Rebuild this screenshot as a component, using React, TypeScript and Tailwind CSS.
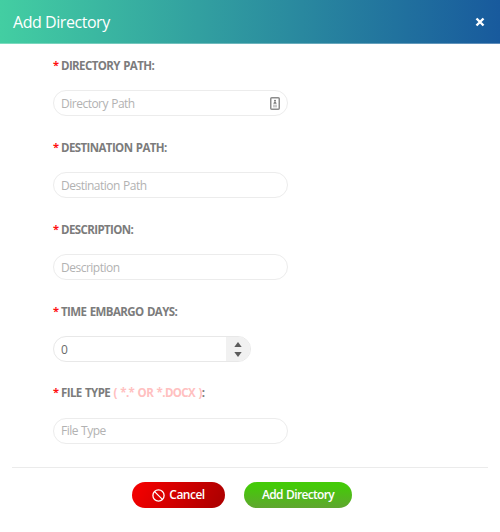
import type { ReactNode } from "react";

function Label({ children }: { children: ReactNode }) {
  return (
    <div className="flex h-[16px] items-center text-[11.5px] leading-[16px] font-bold whitespace-pre text-[#7c7c7c]">
      <span className="w-[8px] pb-[2px] text-[11px] leading-[14px] text-[#ff1010]">*</span>
      <span className="tracking-[-0.6px] [word-spacing:1px]">{children}</span>
    </div>
  );
}

function TextField({ placeholder, inputClass = "mt-[2px]", children }: { placeholder: string; inputClass?: string; children?: ReactNode }) {
  return (
    <div className="flex h-[26px] w-[235px] items-center justify-between rounded-full border border-[#ececec] pr-[7px] pl-[7px]">
      <input
        placeholder={placeholder}
        className={`w-[180px] bg-transparent text-[12px] leading-[18px] tracking-[-0.5px] outline-none [word-spacing:0.5px] placeholder:text-[#b2b2b2] ${inputClass}`}
      />
      {children}
    </div>
  );
}

function ContactIcon() {
  return (
    <svg width="10" height="13" viewBox="0 0 10 13" fill="none">
      <rect x="0.75" y="0.75" width="8.5" height="11.5" rx="1" stroke="#8c8c8c" strokeWidth="1.5" />
      <circle cx="5" cy="3.8" r="1" fill="#777" />
      <path d="M3.4 6.7c0-2.4 3.2-2.4 3.2 0z" fill="#777" />
      <path d="M3 8.2h4M3 9.8h4" stroke="#aaa" strokeWidth="0.9" />
    </svg>
  );
}

export default function App() {
  return (
    <div className="flex h-[532px] w-[500px] flex-col bg-white font-['Open_Sans','Noto_Sans',sans-serif]">
      <header className="flex h-[44px] shrink-0 items-center justify-between border-b border-white/30 bg-[linear-gradient(90deg,#43cea2,#185a9d)] pr-[15px] pl-[13px]">
        <h1 className="text-[16px] leading-[24px] font-normal tracking-[-0.45px] text-white">Add Directory</h1>
        <button aria-label="Close" className="flex">
          <svg width="10" height="10" viewBox="0 0 10 10">
            <path d="M1.5 1.5l7 7M8.5 1.5l-7 7" stroke="white" strokeWidth="2.4" />
          </svg>
        </button>
      </header>

      <main className="pt-[14px] pl-[53px]">
        <div className="flex h-[82px] flex-col gap-[16px]">
          <Label>DIRECTORY PATH:</Label>
          <TextField placeholder="Directory Path">
            <ContactIcon />
          </TextField>
        </div>
        <div className="flex h-[82px] flex-col gap-[16px]">
          <Label>DESTINATION PATH:</Label>
          <TextField placeholder="Destination Path" />
        </div>
        <div className="flex h-[82px] flex-col gap-[16px]">
          <Label>DESCRIPTION:</Label>
          <TextField placeholder="Description" />
        </div>
        <div className="flex h-[81px] flex-col gap-[16px]">
          <Label>TIME EMBARGO DAYS:</Label>
          <div className="flex h-[26px] w-[198px] overflow-hidden rounded-full border border-[#e8e8e8]">
            <div className="flex-1 pl-[7px] text-[12px] leading-[25px] text-[#6a6a6a]">0</div>
            <div className="flex w-[24px] flex-col items-center justify-center gap-[5px] bg-[#f1f1f1]">
              <svg width="8" height="5" viewBox="0 0 8 5"><path d="M4 0l3.7 5H.3z" fill="#5c5c5c" /></svg>
              <svg width="8" height="5" viewBox="0 0 8 5"><path d="M.3 0h7.4L4 5z" fill="#5c5c5c" /></svg>
            </div>
          </div>
        </div>
        <div className="flex h-[82px] flex-col gap-[17px]">
          <Label>
            FILE TYPE <span className="text-[#ffc0c0]">( *.* OR *.DOCX )</span>:
          </Label>
          <TextField placeholder="File Type" inputClass="mt-0" />
        </div>
      </main>

      <footer className="mx-[12px] flex border-t border-[#ebebeb] pt-[14px] pl-[120px]">
        <button className="flex h-[26px] w-[93px] items-center justify-center gap-[4px] rounded-full bg-[linear-gradient(120deg,#f00000_10%,#b00000_90%)] text-[12px] font-semibold tracking-[-0.5px] text-white">
          <svg width="13" height="13" viewBox="0 0 13 13" fill="none" stroke="white" strokeWidth="1.3">
            <circle cx="6.5" cy="6.5" r="5.6" />
            <path d="M2.6 2.6l7.8 7.8" />
          </svg>
          Cancel
        </button>
        <button className="ml-[19px] h-[26px] w-[108px] rounded-full bg-[linear-gradient(180deg,#44ca08_15%,#5fa62f)] text-[12px] font-semibold tracking-[-0.65px] text-white [word-spacing:0.8px]">
          Add Directory
        </button>
      </footer>
    </div>
  );
}
